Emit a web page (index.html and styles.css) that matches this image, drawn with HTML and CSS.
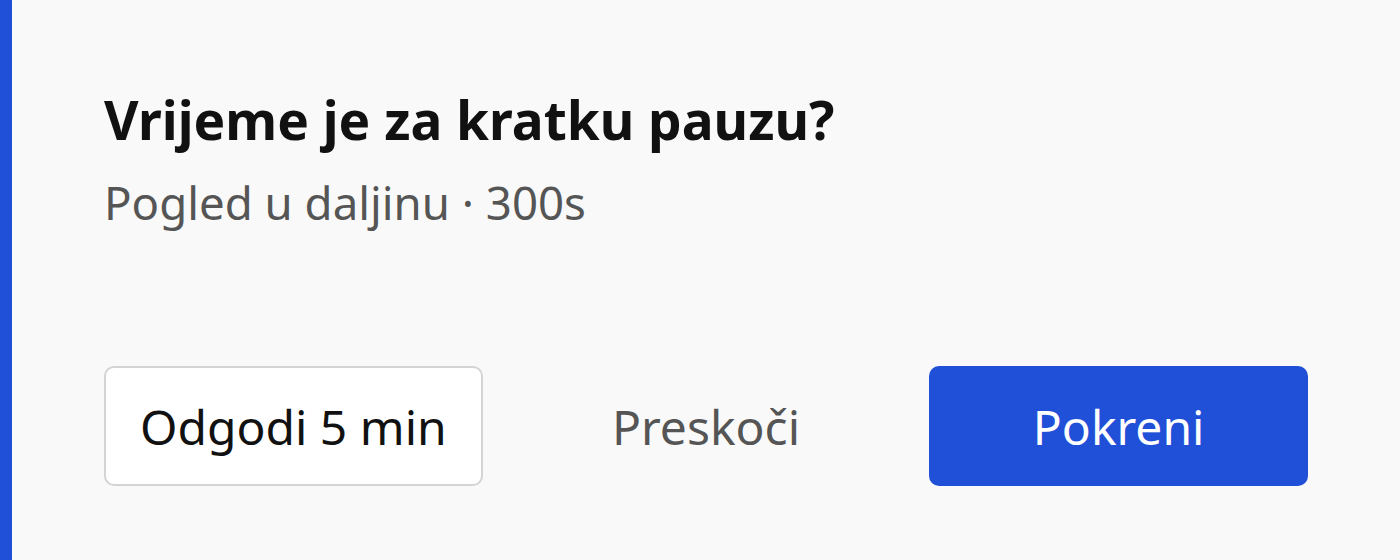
FILE: index.html
```html
<!DOCTYPE html>
<html lang="hr">
<head>
    <meta charset="UTF-8">
    <meta name="viewport" content="width=device-width, initial-scale=1.0">
    <title>Pauza</title>
    <link rel="stylesheet" href="styles.css">
</head>
<body>
    <div class="prompt">
        <div class="text">
            <h1 class="title">Vrijeme je za kratku pauzu?</h1>
            <p class="subtitle">Pogled u daljinu · 300s</p>
        </div>
        <div class="actions">
            <button class="btn btn-outline">Odgodi 5 min</button>
            <button class="btn btn-ghost">Preskoči</button>
            <button class="btn btn-primary">Pokreni</button>
        </div>
    </div>
</body>
</html>
```

FILE: styles.css
```css
html, body {
    margin: 0;
    height: 100%;
}

body {
    font-family: "Noto Sans", sans-serif;
    background-color: #f9f9f9;
}

.prompt {
    box-sizing: border-box;
    height: 100%;
    border-left: 12px solid #204fd8;
    padding: 88px 92px 74px 92px;
    display: flex;
    flex-direction: column;
    justify-content: space-between;
}

.title {
    margin: 0;
    font-size: 53.2px;
    font-weight: 700;
    line-height: 63px;
    color: #111;
}

.subtitle {
    margin: 20px 0 0;
    font-size: 45.6px;
    line-height: 1.4;
    color: #555;
}

.actions {
    display: grid;
    grid-template-columns: repeat(3, 1fr);
    gap: 34px;
}

.btn {
    height: 120px;
    font-family: inherit;
    font-size: 48px;
    border-radius: 10px;
    border: 2px solid transparent;
    cursor: pointer;
}

.btn-outline {
    background-color: #fff;
    border-color: #d4d4d4;
    color: #111;
}

.btn-ghost {
    background: none;
    color: #555;
}

.btn-primary {
    background-color: #204fd8;
    color: #fff;
}
```
